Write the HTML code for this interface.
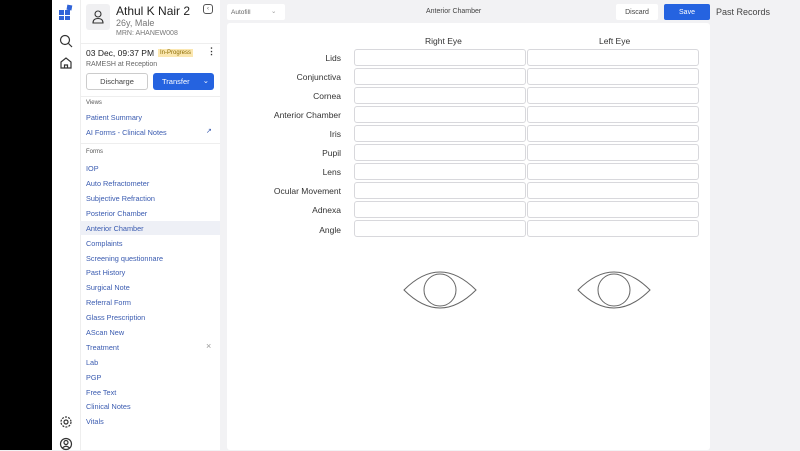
<!DOCTYPE html>
<html><head><style>
*{box-sizing:border-box;margin:0;padding:0}
body{width:800px;height:450px;overflow:hidden;background:#f2f2f4;font-family:"Liberation Sans",sans-serif;position:relative}
.a{position:absolute}
.blk{left:0;top:0;width:52px;height:450px;background:#000}
.ib{left:52px;top:0;width:28px;height:450px;background:#fff}
.sb{left:80px;top:0;width:140px;height:450px;background:#fff;border-left:1px solid #eee}
.lnk{position:absolute;left:86px;font-size:7.3px;color:#3a5bb0}
.inp{position:absolute;height:17px;background:#fff;border:1px solid #d8d8dc;border-radius:3px}
.lbl{position:absolute;width:200px;left:141px;text-align:right;font-size:8.5px;color:#333}
.btn{display:flex;align-items:center;justify-content:center}
</style></head><body>
<div class="a blk"></div>
<div class="a ib"></div>
<svg class="a" style="left:58px;top:4px" width="16" height="16"><rect x="1" y="6" width="5" height="5" fill="#2f63d8"/><rect x="7" y="6" width="5" height="5" fill="#2f63d8"/><rect x="1" y="12" width="5" height="4" fill="#2f63d8"/><rect x="7" y="12" width="5" height="4" fill="#2f63d8"/><rect x="9" y="1" width="5" height="5" fill="#2f63d8" transform="rotate(10 11 3)"/></svg>
<svg class="a" style="left:59px;top:34px" width="14" height="14" fill="none" stroke="#333" stroke-width="1.2"><circle cx="6" cy="6" r="4.5"/><path d="M9.5 9.5L13 13"/></svg>
<svg class="a" style="left:59px;top:56px" width="14" height="14" fill="none" stroke="#333" stroke-width="1.2"><path d="M2 6L7 2L12 6V12H2Z"/><path d="M5.5 12V9H8.5V12"/></svg>
<svg class="a" style="left:59px;top:415px" width="14" height="14" fill="none" stroke="#333" stroke-width="1.2"><circle cx="7" cy="7" r="2"/><circle cx="7" cy="7" r="5" stroke-dasharray="2 1.2"/></svg>
<svg class="a" style="left:59px;top:437px" width="14" height="14" fill="none" stroke="#333" stroke-width="1.2"><circle cx="7" cy="7" r="5.5"/><circle cx="7" cy="5.5" r="2"/><path d="M3.5 11Q7 7.5 10.5 11"/></svg>
<div class="a sb"></div>
<div class="a" style="left:86px;top:4px;width:24px;height:26px;background:#f0f0f2;border-radius:3px"></div>
<svg class="a" style="left:91px;top:9px" width="14" height="16" fill="none" stroke="#333" stroke-width="1.1"><circle cx="7" cy="5" r="3"/><path d="M2 14Q2 9.5 7 9.5Q12 9.5 12 14Z"/></svg>
<div class="a" style="left:116px;top:4px;font-size:12px;color:#222">Athul K Nair 2</div>
<div class="a" style="left:116px;top:18px;font-size:9px;color:#777">26y, Male</div>
<div class="a" style="left:116px;top:30px;font-size:7px;color:#777">MRN: AHANEW008</div>
<div class="a" style="left:203px;top:4px;width:10px;height:10px;border:1px solid #555;border-radius:3px;font-size:6px;line-height:8px;text-align:center;color:#555">‹</div>
<div class="a" style="left:80px;top:43px;width:140px;border-top:1px solid #eee"></div>
<div class="a" style="left:86px;top:48px;font-size:8.5px;color:#222">03 Dec, 09:37 PM</div>
<div class="a" style="left:158px;top:49px;font-size:6px;color:#8a6a00;background:#fbe7b0;padding:1px 2px">In-Progress</div>
<div class="a" style="left:207px;top:46px;font-size:9px;color:#333;font-weight:bold">⋮</div>
<div class="a" style="left:86px;top:61px;font-size:7px;color:#666">RAMESH at Reception</div>
<div class="a btn" style="left:86px;top:73px;width:62px;height:17px;border:1px solid #ccc;border-radius:3px;font-size:7.5px;color:#444">Discharge</div>
<div class="a btn" style="left:153px;top:73px;width:61px;height:17px;background:#2563e0;border-radius:3px;font-size:7.5px;color:#fff;justify-content:flex-start;padding-left:9px">Transfer<span style="position:absolute;right:5px;top:3px">⌄</span></div>
<div class="a" style="left:80px;top:96px;width:140px;border-top:1px solid #eee"></div>
<div class="a" style="left:86px;top:100px;font-size:6px;color:#555">Views</div>
<div class="lnk" style="top:113px">Patient Summary</div>
<div class="lnk" style="top:128px">AI Forms - Clinical Notes</div>
<div class="a" style="left:206px;top:127px;font-size:7px;color:#3a5bb0">↗</div>
<div class="a" style="left:80px;top:143px;width:140px;border-top:1px solid #eee"></div>
<div class="a" style="left:86px;top:149px;font-size:6px;color:#555">Forms</div>
<div class="a" style="left:80px;top:221px;width:140px;height:14px;background:#eef0f6"></div>
<div class="lnk" style="top:164px">IOP</div>
<div class="lnk" style="top:179px">Auto Refractometer</div>
<div class="lnk" style="top:194px">Subjective Refraction</div>
<div class="lnk" style="top:209px">Posterior Chamber</div>
<div class="lnk" style="top:224px">Anterior Chamber</div>
<div class="lnk" style="top:239px">Complaints</div>
<div class="lnk" style="top:254px">Screening questionnare</div>
<div class="lnk" style="top:268px">Past History</div>
<div class="lnk" style="top:283px">Surgical Note</div>
<div class="lnk" style="top:298px">Referral Form</div>
<div class="lnk" style="top:313px">Glass Prescription</div>
<div class="lnk" style="top:328px">AScan New</div>
<div class="lnk" style="top:343px">Treatment</div>
<div class="a" style="left:206px;top:341px;font-size:9px;color:#999">×</div>
<div class="lnk" style="top:358px">Lab</div>
<div class="lnk" style="top:373px">PGP</div>
<div class="lnk" style="top:388px">Free Text</div>
<div class="lnk" style="top:402px">Clinical Notes</div>
<div class="lnk" style="top:417px">Vitals</div>

<div class="a btn" style="left:227px;top:4px;width:58px;height:16px;background:#fff;border-radius:2px;font-size:6.5px;color:#666;justify-content:flex-start;padding-left:4px">Autofill<span style="position:absolute;left:44px;top:3px;color:#999">⌄</span></div>
<div class="a" style="left:426px;top:8px;font-size:7px;color:#444">Anterior Chamber</div>
<div class="a btn" style="left:616px;top:4px;width:42px;height:16px;background:#fff;border-radius:2px;font-size:7px;color:#444">Discard</div>
<div class="a btn" style="left:664px;top:4px;width:46px;height:16px;background:#2563e0;border-radius:2px;font-size:7px;color:#fff">Save</div>
<div class="a" style="left:716px;top:7px;font-size:9px;color:#444">Past Records</div>
<div class="a" style="left:227px;top:23px;width:483px;height:427px;background:#fff;border-radius:3px"></div>
<div class="a" style="left:425px;top:36px;font-size:8.5px;color:#333">Right Eye</div>
<div class="a" style="left:599px;top:36px;font-size:8.5px;color:#333">Left Eye</div>

<div class="lbl" style="top:53px">Lids</div><div class="inp" style="left:354px;top:49px;width:172px"></div><div class="inp" style="left:527px;top:49px;width:172px"></div>
<div class="lbl" style="top:72px">Conjunctiva</div><div class="inp" style="left:354px;top:68px;width:172px"></div><div class="inp" style="left:527px;top:68px;width:172px"></div>
<div class="lbl" style="top:91px">Cornea</div><div class="inp" style="left:354px;top:87px;width:172px"></div><div class="inp" style="left:527px;top:87px;width:172px"></div>
<div class="lbl" style="top:110px">Anterior Chamber</div><div class="inp" style="left:354px;top:106px;width:172px"></div><div class="inp" style="left:527px;top:106px;width:172px"></div>
<div class="lbl" style="top:129px">Iris</div><div class="inp" style="left:354px;top:125px;width:172px"></div><div class="inp" style="left:527px;top:125px;width:172px"></div>
<div class="lbl" style="top:148px">Pupil</div><div class="inp" style="left:354px;top:144px;width:172px"></div><div class="inp" style="left:527px;top:144px;width:172px"></div>
<div class="lbl" style="top:167px">Lens</div><div class="inp" style="left:354px;top:163px;width:172px"></div><div class="inp" style="left:527px;top:163px;width:172px"></div>
<div class="lbl" style="top:186px">Ocular Movement</div><div class="inp" style="left:354px;top:182px;width:172px"></div><div class="inp" style="left:527px;top:182px;width:172px"></div>
<div class="lbl" style="top:205px">Adnexa</div><div class="inp" style="left:354px;top:201px;width:172px"></div><div class="inp" style="left:527px;top:201px;width:172px"></div>
<div class="lbl" style="top:225px">Angle</div><div class="inp" style="left:354px;top:220px;width:172px"></div><div class="inp" style="left:527px;top:220px;width:172px"></div>

<svg class="a" style="left:400px;top:268px" width="80" height="44" fill="none" stroke="#666" stroke-width="1"><path d="M4 22Q40 -14 76 22Q40 58 4 22Z"/><circle cx="40" cy="22" r="16"/></svg>
<svg class="a" style="left:574px;top:268px" width="80" height="44" fill="none" stroke="#666" stroke-width="1"><path d="M4 22Q40 -14 76 22Q40 58 4 22Z"/><circle cx="40" cy="22" r="16"/></svg>
</body></html>
